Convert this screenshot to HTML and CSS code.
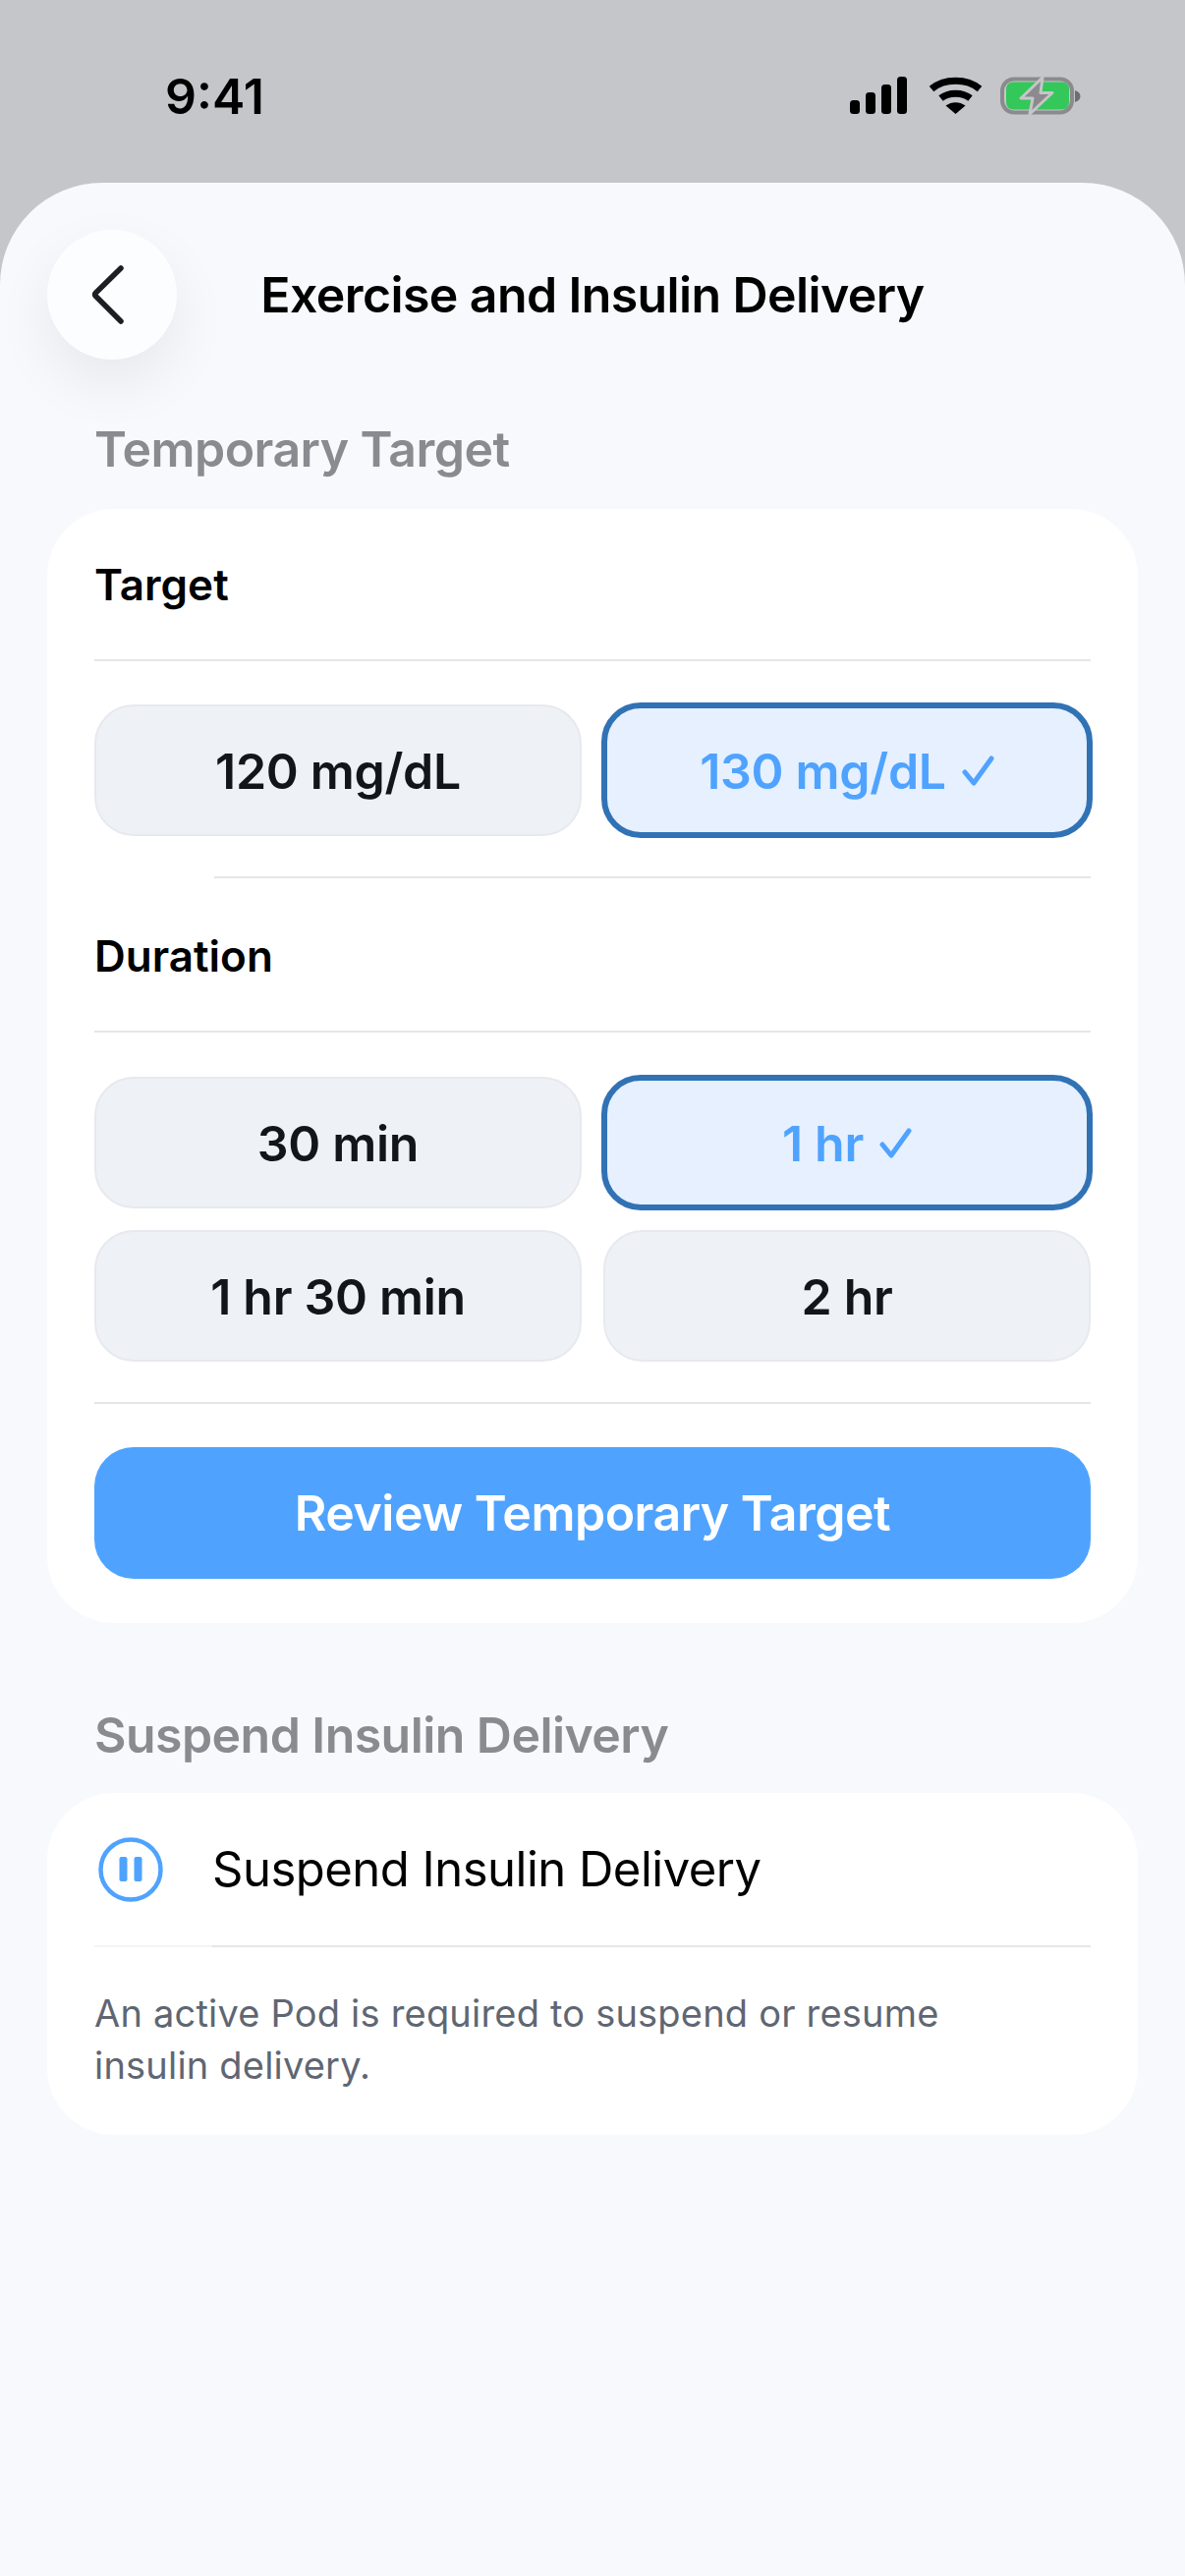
FILE: index.html
```html
<!DOCTYPE html>
<html lang="en">
<head>
  <meta charset="UTF-8" />
  <title>Exercise and Insulin Delivery</title>
  <link rel="stylesheet" href="styles.css">
</head>
<body>

  <div class="status-bar">
    <div class="status-time">9:41</div>
    <div class="status-icons">
      <svg class="icon-signal" width="58" height="38" viewBox="0 0 58 38">
        <rect x="0" y="24" width="10" height="14" rx="3.5" fill="#000"/>
        <rect x="16" y="16" width="10" height="22" rx="3.5" fill="#000"/>
        <rect x="32" y="8" width="10" height="30" rx="3.5" fill="#000"/>
        <rect x="48" y="0" width="10" height="38" rx="3.5" fill="#000"/>
      </svg>
      <svg class="icon-wifi" width="55" height="38" viewBox="0 0 55 38">
        <path d="M3 12.500 C16 1.500 39 1.500 52 12.500" fill="none" stroke="#000" stroke-width="7"/>
        <path d="M12.500 22 C20.500 15.500 34.500 15.500 42.500 22" fill="none" stroke="#000" stroke-width="7"/>
        <path d="M17.500 29.500 C23.500 25 31.500 25 37.500 29.500 L27.500 38 Z" fill="#000"/>
      </svg>
      <svg class="icon-battery" width="82" height="40" viewBox="0 0 82 40">
        <rect x="2" y="2.500" width="71" height="34" rx="12" fill="none" stroke="#8b8b8d" stroke-width="4"/>
        <rect x="6" y="5.500" width="64" height="28" rx="7" fill="#34c759"/>
        <path d="M76 14 C79.500 15 81.500 17 81.500 20 C81.500 23 79.500 25 76 26 Z" fill="#6e6e70"/>
        <path d="M43 1 L21 22 H33 L30 38 L53 16.500 H41 Z" fill="#8b8b8d" stroke="#c5c6ca" stroke-width="3" stroke-linejoin="round"/>
      </svg>
    </div>
  </div>

  <div class="sheet">
    <div class="sheet-header">
      <div class="back-btn">
        <svg width="36" height="60" viewBox="0 0 36 60">
          <path d="M31 3 L5.500 28 Q4 29.500 5 31 L31 57" fill="none" stroke="#1b1f24" stroke-width="5.500" stroke-linecap="round" stroke-linejoin="round"/>
        </svg>
      </div>
      <h1>Exercise and Insulin Delivery</h1>
    </div>

    <h2 class="section-title">Temporary Target</h2>
    <div class="card">
      <div class="card-label">Target</div>
      <div class="options options-first">
        <div class="option">120 mg/dL</div>
        <div class="option selected">130 mg/dL
          <svg class="tick" width="33" height="32" viewBox="0 0 33 32">
            <path d="M3 17 L12 28 L30 3" fill="none" stroke="#4fa3ff" stroke-width="5" stroke-linecap="round" stroke-linejoin="round"/>
          </svg>
        </div>
      </div>
      <div class="divider-inset"></div>
      <div class="card-label label-duration">Duration</div>
      <div class="options options-last">
        <div class="option">30 min</div>
        <div class="option selected">1 hr
          <svg class="tick" width="33" height="32" viewBox="0 0 33 32">
            <path d="M3 17 L12 28 L30 3" fill="none" stroke="#4fa3ff" stroke-width="5" stroke-linecap="round" stroke-linejoin="round"/>
          </svg>
        </div>
        <div class="option">1 hr 30 min</div>
        <div class="option">2 hr</div>
      </div>
      <div class="review-btn">Review Temporary Target</div>
    </div>

    <h2 class="section-title section-second">Suspend Insulin Delivery</h2>
    <div class="card card-suspend">
      <div class="suspend-row">
        <svg class="icon-pause" width="66" height="66" viewBox="0 0 66 66">
          <circle cx="33" cy="33" r="30.500" fill="none" stroke="#4fa3ff" stroke-width="4.500"/>
          <rect x="21.500" y="20" width="8" height="25" rx="2" fill="#4fa3ff"/>
          <rect x="36.500" y="20" width="8" height="25" rx="2" fill="#4fa3ff"/>
        </svg>
        <div class="suspend-text">Suspend Insulin Delivery</div>
      </div>
      <p class="suspend-note">An active Pod is required to suspend or resume insulin delivery.</p>
    </div>
  </div>

</body>
</html>
```

FILE: styles.css
```css
* {
  box-sizing: border-box;
}
html, body {
  margin: 0;
  padding: 0;
}
body {
  width: 1206px;
  height: 2622px;
  overflow: hidden;
  background-color: #c5c6ca;
  color: #000;
  font-family: Inter, "Liberation Sans", sans-serif;
  display: flex;
  flex-direction: column;
}
.status-bar {
  height: 186px;
  flex: none;
  display: flex;
  justify-content: space-between;
  align-items: flex-start;
  padding: 69px 106px 0 168px;
}
.status-time {
  font-size: 50px;
  line-height: 58px;
  font-weight: 600;
}
.status-icons {
  display: flex;
  align-items: flex-start;
  padding-top: 9px;
}
.icon-wifi {
  margin: 0 18px 0 22px;
}
.sheet {
  flex: 1;
  background-color: #f8f9fd;
  border-radius: 104px 104px 0 0;
  padding: 48px 48px 0;
}
.sheet-header {
  display: grid;
  grid-template-columns: 132px 1fr 132px;
  align-items: center;
  margin-bottom: 61px;
}
.back-btn {
  width: 132px;
  height: 132px;
  border-radius: 50%;
  background-color: #fcfdfe;
  box-shadow: 0 24px 60px rgba(0, 0, 0, 0.07);
  display: flex;
  align-items: center;
  justify-content: center;
  padding-right: 8px;
}
h1 {
  margin: 0;
  font-size: 50px;
  line-height: 60px;
  font-weight: 600;
  letter-spacing: -0.6px;
  text-align: center;
  white-space: nowrap;
}
.section-title {
  margin: 0 0 31px 48px;
  font-size: 50px;
  line-height: 60px;
  font-weight: 600;
  letter-spacing: -0.55px;
  color: #8a8b90;
}
.section-second {
  margin-top: 84px;
  margin-bottom: 29px;
}
.card {
  background-color: #fff;
  border-radius: 68px;
  padding: 0 48px 45px;
}
.card-label {
  height: 155px;
  padding-top: 47px;
  font-size: 44px;
  line-height: 60px;
  font-weight: 600;
  border-bottom: 2px solid #e6e6e8;
}
.label-duration {
  height: 157px;
  padding-top: 49px;
}
.options {
  display: grid;
  grid-template-columns: 1fr 1fr;
  gap: 22px;
  padding-top: 44px;
}
.options-first {
  padding-bottom: 41px;
}
.options-last {
  padding-top: 45px;
  padding-bottom: 41px;
  margin-bottom: 44px;
  border-bottom: 2px solid #e6e6e8;
}
.divider-inset {
  margin-left: 122px;
  border-top: 2px solid #e6e6e8;
}
.option {
  height: 134px;
  padding-top: 2px;
  border-radius: 40px;
  border: 2px solid #e7e9ef;
  background-color: #eef1f6;
  color: #12161b;
  font-size: 50px;
  font-weight: 600;
  letter-spacing: -0.3px;
  display: flex;
  align-items: center;
  justify-content: center;
  gap: 16px;
}
.option.selected {
  margin: -2px;
  height: 138px;
  border: 6px solid #3172b5;
  background-color: #e6f0fe;
  color: #4fa3ff;
}
.review-btn {
  height: 134px;
  border-radius: 40px;
  background-color: #4fa3ff;
  color: #fff;
  font-size: 50px;
  font-weight: 600;
  letter-spacing: -0.5px;
  display: flex;
  align-items: center;
  justify-content: center;
}
.card-suspend {
  padding-bottom: 0;
  height: 348px;
}
.suspend-row {
  height: 157px;
  display: flex;
  border-bottom: 2px solid #f4f4f5;
}
.icon-pause {
  flex: none;
  align-self: center;
  margin: 0 50px 0 4px;
}
.suspend-text {
  flex: 1;
  display: flex;
  align-items: center;
  margin-bottom: -2px;
  border-bottom: 2px solid #e6e6e8;
  font-size: 49px;
  letter-spacing: -0.5px;
}
.suspend-note {
  margin: 41px 0 0;
  max-width: 900px;
  font-size: 38px;
  line-height: 53px;
  letter-spacing: 0.2px;
  color: #5f6672;
}
```
